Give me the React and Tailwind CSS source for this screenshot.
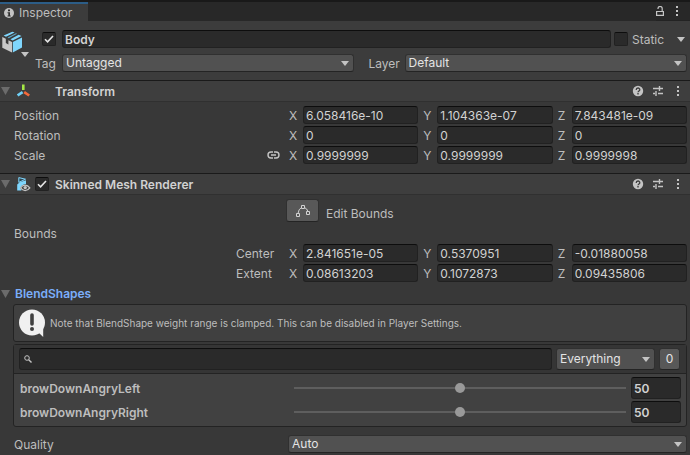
import { useState } from 'react'
import clsx from 'clsx'

const TRANSFORM_ROWS = [
  { label: 'Position', values: ['6.058416e-10', '1.104363e-07', '7.843481e-09'] },
  { label: 'Rotation', values: ['0', '0', '0'] },
  { label: 'Scale', values: ['0.9999999', '0.9999999', '0.9999998'], linked: true },
]

const BOUNDS_ROWS = [
  { label: 'Center', values: ['2.841651e-05', '0.5370951', '-0.01880058'] },
  { label: 'Extent', values: ['0.08613203', '0.1072873', '0.09435806'] },
]

const BLEND_SHAPES = ['browDownAngryLeft', 'browDownAngryRight']

const AXES = ['X', 'Y', 'Z']

const FIELD =
  'min-w-0 rounded-[3px] border border-[#212121] border-t-[#0d0d0d] bg-[#2a2a2a] text-[#d2d2d2] outline-none'

function Caret({ className }) {
  return (
    <svg viewBox="0 0 8 5" className={clsx('h-[5px] w-2 fill-[#c4c4c4]', className)} aria-hidden="true">
      <path d="M0 0h8L4 5z" />
    </svg>
  )
}

function Dots() {
  return (
    <svg viewBox="0 0 4 12" className="h-3 w-1 fill-[#c4c4c4]" aria-hidden="true">
      <path d="M1 1h2v2H1zM1 5h2v2H1zM1 9h2v2H1z" />
    </svg>
  )
}

function Dropdown({ label, options, className, tall }) {
  return (
    <div className={clsx('relative', className)}>
      <select
        aria-label={label}
        className={clsx(
          'block w-full appearance-none rounded-[3px] border border-[#303030] border-b-[#242424] bg-[#515151] pr-5 pl-[3px] leading-4 text-[#e4e4e4] outline-none',
          tall ? 'h-[22px]' : 'h-[18px]',
        )}
      >
        {options.map((option) => (
          <option key={option}>{option}</option>
        ))}
      </select>
      <Caret className="pointer-events-none absolute inset-y-0 right-[5px] my-auto" />
    </div>
  )
}

function Checkbox({ label, defaultChecked }) {
  return (
    <span className="relative block size-[14px] shrink-0">
      <input
        type="checkbox"
        aria-label={label}
        defaultChecked={defaultChecked}
        className="peer block size-[14px] appearance-none rounded-[2px] border border-[#212121] border-t-[#0d0d0d] bg-[#2a2a2a]"
      />
      <svg
        viewBox="0 0 14 14"
        className="pointer-events-none absolute inset-0 hidden fill-none stroke-[#e6e6e6] peer-checked:block"
        strokeWidth="1.6"
        aria-hidden="true"
      >
        <path d="M3 7.2 5.6 9.8 11 4" />
      </svg>
    </span>
  )
}

function FoldArrow() {
  return (
    <svg viewBox="0 0 9 8" className="h-2 w-[9px] shrink-0 fill-[#6b6b6b]" aria-hidden="true">
      <path d="M0 0h9L4.5 8z" />
    </svg>
  )
}

function PrefabIcon() {
  return (
    <svg viewBox="0 0 20 22" className="h-[22px] w-5" aria-hidden="true">
      <path d="M.3 6 3.8 7.8V12l2.6 1.6V9.2L10 11v10.4L.3 16.8z" fill="#c8c8c8" />
      <path d="M10.8 11 20 6.4v10.2l-9.2 4.800z" fill="#7fd6fd" />
      <path d="M1.6 4.6 10.4.8l2.2.8L4 5.700zM8.400 8.300l8.200-4.500 2.900 1.200-8.800 4.400z" fill="#7fd6fd" />
      <path d="M5.6 6.500 14 2.300l1 .4-8.200 4.500z" fill="#5fa9c9" />
    </svg>
  )
}

function TransformIcon() {
  return (
    <svg viewBox="0 0 14 14" className="size-[14px]" fill="none" strokeWidth="2.6" aria-hidden="true">
      <path d="M6.300.5v5.500" stroke="#a5e845" />
      <path d="M5.600 8.200.6 11.500" stroke="#6fd0f7" />
      <path d="m7.200 8.200 5 3.300" stroke="#f46a3c" />
    </svg>
  )
}

function SkinnedMeshIcon() {
  return (
    <svg viewBox="0 0 14 15" className="h-[15px] w-[14px]" aria-hidden="true">
      <path d="M1.800.6v4.800L8.500 2.200z" fill="#2f4a56" stroke="#7fd6fd" />
      <path d="M.2 7.500 2.800 5.200 9 3.200V7C6 7.200 4 8.800 3.300 11l1.200 2.600H.2z" fill="#7fd6fd" />
      <path d="M3.600 10.900c2.400-3.700 6.600-3.700 9.200 0-2.600 3.600-6.800 3.600-9.200 0z" fill="#3e3e3e" stroke="#c4c4c4" strokeWidth="1.3" />
      <circle cx="8.2" cy="10.6" r="1.7" fill="#c4c4c4" />
    </svg>
  )
}

function ComponentHeader({ title, icon, toggle }) {
  return (
    <header className="flex h-[22px] items-center border-t border-b border-t-[#1a1a1a] border-b-[#303030] bg-[#3e3e3e] pr-[10px] pl-[1px]">
      <button type="button" aria-label={`Fold ${title}`} className="flex w-4 items-center">
        <FoldArrow />
      </button>
      <span className="flex w-[18px]">{icon}</span>
      <span className="w-5">{toggle && <Checkbox label={`Enable ${title}`} defaultChecked />}</span>
      <h2 className="flex-1 pt-[2px] font-semibold text-[#d2d2d2]">{title}</h2>
      <div className="flex items-center gap-[9px]">
        <button type="button" aria-label="Help">
          <svg viewBox="0 0 12 12" className="block size-3" aria-hidden="true">
            <circle cx="6" cy="6" r="5.2" fill="#c4c4c4" />
            <path d="M4.200 4.900c0-2.500 3.600-2.500 3.600-.2C7.800 6 6 5.900 6 7.300" fill="none" stroke="#3e3e3e" strokeWidth="1.3" />
            <path d="M5.300 8.100h1.400v1.400H5.300z" fill="#3e3e3e" />
          </svg>
        </button>
        <button type="button" aria-label="Presets">
          <svg viewBox="0 0 10 10" className="block size-[10px]" fill="none" stroke="#c4c4c4" aria-hidden="true">
            <path d="M0 2.500h6M6.500 0v5M6.500 2.500H10M0 7.500h2M3 5v5M5 7.500h5" strokeWidth="1.4" />
          </svg>
        </button>
        <button type="button" aria-label="More" className="pl-1">
          <Dots />
        </button>
      </div>
    </header>
  )
}

function Vector3Row({ label, values, linked, indent }) {
  return (
    <div className="flex h-[18px] items-center">
      <div className={clsx('flex w-[275px] shrink-0 items-center justify-between pr-[9px]', indent && 'pl-[222px]')}>
        <span className="pt-[2px]">{label}</span>
        {linked && (
          <button type="button" aria-label="Constrain proportions">
            <svg
              viewBox="0 0 13 8"
              className="block h-2 w-[13px] fill-none stroke-[#c4c4c4]"
              strokeWidth="1.4"
              aria-hidden="true"
            >
              <path d="M6 1H4a3 3 0 0 0 0 6h2M7 1h2a3 3 0 0 1 0 6H7M4 4h5" />
            </svg>
          </button>
        )}
      </div>
      <div className="grid flex-1 grid-cols-3 gap-[5px]">
        {AXES.map((axis, i) => (
          <label key={axis} className="flex min-w-0 items-center">
            <span className="w-[14px] shrink-0 pt-[2px]">{axis}</span>
            <input
              type="text"
              aria-label={`${label} ${axis}`}
              defaultValue={values[i]}
              className={clsx(FIELD, 'h-[18px] flex-1 px-[2px]')}
            />
          </label>
        ))}
      </div>
    </div>
  )
}

function BlendShapeRow({ name }) {
  const [weight, setWeight] = useState(50)
  const onChange = (event) => setWeight(event.target.value)

  return (
    <div className="flex h-[22px] items-center font-semibold">
      <label htmlFor={name} className="w-[274px] shrink-0 pt-[2px]">
        {name}
      </label>
      <input
        id={name}
        type="range"
        min="0"
        max="100"
        value={weight}
        onChange={onChange}
        className="h-[10px] min-w-0 flex-1 appearance-none bg-transparent [&::-webkit-slider-runnable-track]:h-[2px] [&::-webkit-slider-runnable-track]:bg-[#5e5e5e] [&::-webkit-slider-thumb]:-mt-1 [&::-webkit-slider-thumb]:size-[10px] [&::-webkit-slider-thumb]:appearance-none [&::-webkit-slider-thumb]:rounded-full [&::-webkit-slider-thumb]:bg-[#999999]"
      />
      <input
        type="text"
        aria-label={`${name} weight`}
        value={weight}
        onChange={onChange}
        className={clsx(FIELD, 'ml-[5px] h-[22px] w-[50px] px-[2px]')}
      />
    </div>
  )
}

export default function App() {
  return (
    <main className="min-h-screen bg-[#383838] font-['Inter',sans-serif] text-[12px] leading-4 text-[#bdbdbd]">
      <nav className="flex h-[21px] items-stretch justify-between border-t-2 border-[#191919] bg-[#282828]">
        <button type="button" className="flex w-[88px] items-center gap-[5px] border-t-2 border-[#2c5d87] bg-[#3c3c3c] pl-1">
          <svg viewBox="0 0 10 10" className="size-[10px]" aria-hidden="true">
            <circle cx="5" cy="5" r="5" fill="#c4c4c4" />
            <path d="M4 1.500h2v1.700H4zM3.500 4.200H6V7.500h.7v1H3.500v-1h.8V5.200h-.8z" fill="#303030" />
          </svg>
          Inspector
        </button>
        <div className="flex items-center gap-[11px] border-b border-[#232323] pr-[11px]">
          <button type="button" aria-label="Lock">
            <svg
              viewBox="0 0 8 10"
              className="block h-[10px] w-2 fill-none stroke-[#c4c4c4]"
              strokeWidth="1.2"
              aria-hidden="true"
            >
              <path d="M.6 5.500h6.800v3.900H.6zM2 3V2.500a2 2 0 0 1 4.200 0v3" />
            </svg>
          </button>
          <button type="button" aria-label="Tab menu">
            <Dots />
          </button>
        </div>
      </nav>

      <section className="flex h-[59px] bg-[#3c3c3c] pt-[9px] pr-[3px]">
        <button type="button" aria-label="Select icon" className="flex h-[27px] w-[35px] pt-[1px] pl-[2px]">
          <PrefabIcon />
          <Caret className="-ml-[1px] self-end" />
        </button>
        <div className="flex min-w-0 flex-1 flex-col gap-[6px]">
          <div className="flex h-[18px] items-center pl-[7px]">
            <Checkbox label="Active" defaultChecked />
            <input
              type="text"
              aria-label="Name"
              defaultValue="Body"
              className={clsx(FIELD, 'mr-[3px] ml-[6px] h-[18px] flex-1 px-[2px] font-semibold')}
            />
            <Checkbox label="Static" />
            <span className="ml-1 w-[45px] pt-[2px]">Static</span>
            <button type="button" aria-label="Static flags" className="pr-[2px]">
              <Caret className="block" />
            </button>
          </div>
          <div className="flex gap-[15px]">
            <div className="flex flex-1 items-center">
              <span className="w-[27px] pt-[2px]">Tag</span>
              <Dropdown label="Tag" options={['Untagged', 'Player']} className="flex-1" />
            </div>
            <div className="flex flex-1 items-center">
              <span className="w-9 pt-[2px]">Layer</span>
              <Dropdown label="Layer" options={['Default', 'UI']} className="flex-1" />
            </div>
          </div>
        </div>
      </section>

      <section>
        <ComponentHeader title="Transform" icon={<TransformIcon />} />
        <div className="flex flex-col gap-[2px] pt-1 pr-[3px] pb-[9px] pl-[14px]">
          {TRANSFORM_ROWS.map((row) => (
            <Vector3Row key={row.label} {...row} />
          ))}
        </div>
      </section>

      <section>
        <ComponentHeader title="Skinned Mesh Renderer" icon={<SkinnedMeshIcon />} toggle />
        <div className="pt-1 pr-[3px] pl-[13px]">
          <div className="flex items-center gap-[7px] pl-[273px]">
            <button
              type="button"
              aria-label="Edit Bounds"
              className="flex h-[23px] w-[33px] items-center justify-center rounded-[3px] border border-[#303030] border-b-[#242424] bg-[#585858]"
            >
              <svg viewBox="0 0 14 12" className="h-3 w-[14px] fill-none stroke-[#d2d2d2]" aria-hidden="true">
                <path d="M5.500.500h3v3h-3zM.500 8.500h3v3h-3zM10.500 6.500h3v3h-3zM5.500 2.500Q2.500 4 2 8.500M8.500 2.500Q11 3.500 12 6.500" />
              </svg>
            </button>
            <span className="pt-[6px]">Edit Bounds</span>
          </div>
          <div className="flex flex-col gap-[2px] pt-1 pl-[1px]">
            <div className="flex h-4 items-center">Bounds</div>
            {BOUNDS_ROWS.map((row) => (
              <Vector3Row key={row.label} {...row} indent />
            ))}
          </div>
        </div>

        <button type="button" className="mt-[3px] flex h-[18px] items-center gap-[5px] pl-[1px] font-semibold text-[#7baefa]">
          <FoldArrow />
          BlendShapes
        </button>

        <div className="flex flex-col gap-[2px] pt-[1px] pr-[3px] pl-[13px]">
          <div className="flex h-[38px] items-center gap-1 rounded-[3px] border border-[#232323] bg-[#404040] pl-1 text-[10px]">
            <svg viewBox="0 0 28 30" className="h-[30px] w-7" aria-hidden="true">
              <circle cx="14" cy="14.5" r="13" fill="#f0f0f0" />
              <path d="M17 25h4l4.200 4V20z" fill="#f0f0f0" />
              <path d="M14 7v9" stroke="#404040" strokeWidth="3.6" strokeLinecap="round" />
              <circle cx="14" cy="21" r="2" fill="#404040" />
            </svg>
            Note that BlendShape weight range is clamped. This can be disabled in Player Settings.
          </div>

          <div className="rounded-[3px] border border-[#232323] bg-[#414141]">
            <div className="flex h-[29px] items-center gap-1 border-b border-[#232323] bg-[#353535] pr-[6px] pl-[5px]">
              <div className="relative flex-1">
                <input
                  type="text"
                  aria-label="Search blend shapes"
                  className={clsx(FIELD, 'block h-[22px] w-full pl-4')}
                />
                <svg
                  viewBox="0 0 8 8"
                  className="pointer-events-none absolute inset-y-0 left-[5px] my-auto size-2 fill-none stroke-[#c4c4c4]"
                  aria-hidden="true"
                >
                  <circle cx="3" cy="3" r="2.3" />
                  <path d="m4.700 4.700 2.800 2.800" strokeWidth="1.4" />
                </svg>
              </div>
              <Dropdown label="Filter" options={['Everything', 'Nothing']} className="w-[99px]" tall />
              <button
                type="button"
                className="h-[22px] w-[21px] rounded-[3px] border border-[#303030] border-b-[#242424] bg-[#585858] text-[#e4e4e4]"
              >
                0
              </button>
            </div>
            <div className="flex flex-col gap-[2px] pt-[3px] pr-[5px] pb-[3px] pl-[6px]">
              {BLEND_SHAPES.map((name) => (
                <BlendShapeRow key={name} name={name} />
              ))}
            </div>
          </div>
        </div>

        <div className="flex items-center pt-2 pr-[3px] pl-[14px]">
          <span className="w-[274px] pt-[2px]">Quality</span>
          <Dropdown label="Quality" options={['Auto', '1 Bone', '2 Bones', '4 Bones']} className="flex-1" />
        </div>
      </section>
    </main>
  )
}
